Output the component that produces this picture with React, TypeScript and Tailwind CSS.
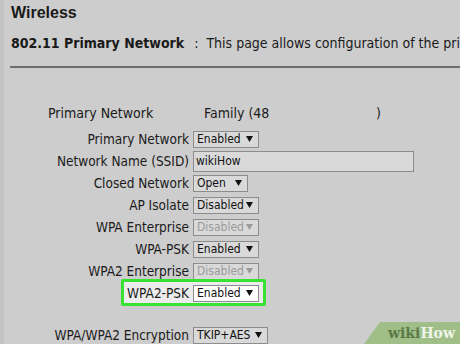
import React from 'react';

const ui = "font-['DejaVu_Sans_Condensed','DejaVu_Sans',sans-serif]";

type SelectProps = { value: string; w: string; disabled?: boolean; white?: boolean };

const Select = ({ value, w, disabled, white }: SelectProps) => (
  <div
    className={`flex h-[17px] items-center justify-between border border-[#8c8c8c] pl-[3px] pr-[5px] text-[12px] leading-none ${w} ${
      white ? 'bg-white' : 'bg-[#d9d9d9]'
    } ${disabled ? 'text-[#9a9a9a]' : 'text-[#111]'}`}
  >
    <span>{value}</span>
    <svg width="7" height="6" viewBox="0 0 7 6">
      <path d="M0 0h7L3.5 6z" fill={disabled ? '#9a9a9a' : '#111'} />
    </svg>
  </div>
);

const rows = [
  { label: 'Primary Network', ctrl: <Select value="Enabled" w="w-[66px]" /> },
  {
    label: 'Network Name (SSID)',
    ctrl: (
      <div className="flex h-[21px] w-[221px] items-center border border-[#8c8c8c] bg-[#d9d9d9] pl-[2px] text-[12px] text-[#111]">
        wikiHow
      </div>
    ),
  },
  { label: 'Closed Network', ctrl: <Select value="Open" w="w-[55px]" /> },
  { label: 'AP Isolate', ctrl: <Select value="Disabled" w="w-[66px]" /> },
  { label: 'WPA Enterprise', ctrl: <Select value="Disabled" w="w-[66px]" disabled /> },
  { label: 'WPA-PSK', ctrl: <Select value="Enabled" w="w-[66px]" /> },
  { label: 'WPA2 Enterprise', ctrl: <Select value="Disabled" w="w-[66px]" disabled /> },
];

export default function App() {
  return (
    <div className={`relative h-[344px] w-[460px] overflow-hidden bg-[#cdcdcd] text-[#1a1a1a] ${ui}`}>
      <div className="absolute left-0 top-0 h-full w-[4px] bg-[#c2c2c2]" />

      <h1 className="pl-[11px] pt-[3px] font-['Liberation_Sans',sans-serif] text-[16px] font-bold leading-[20px]">
        Wireless
      </h1>

      <div className="mt-[11px] overflow-hidden whitespace-nowrap pl-[11px] text-[14px] leading-[18px]">
        <span className="font-bold">802.11 Primary Network</span>
        <span className="pl-[10px] pr-[8px]">:</span>
        This page allows configuration of the primary network
      </div>

      <div className="ml-[10px] mt-[14px] border-t-2 border-[#6e6e6e]" />

      <div className="mt-[34px] flex h-[22px] items-center whitespace-nowrap text-[14px]">
        <span className="w-[204px] pl-[48px]">Primary Network</span>
        <span className="w-[172px]">Family (48</span>
        <span>)</span>
      </div>

      <div className="mt-[4px] grid grid-cols-[189px_auto] gap-x-[4px] text-[13.5px]">
        {rows.map((r) => (
          <React.Fragment key={r.label}>
            <div className="flex h-[22px] items-center justify-end whitespace-nowrap">{r.label}</div>
            <div className="flex h-[22px] items-center">{r.ctrl}</div>
          </React.Fragment>
        ))}

        <div className="relative flex h-[22px] items-center justify-end whitespace-nowrap">
          <div className="absolute left-[121px] top-[-3px] h-[27px] w-[145px] rounded-[2px] border-[3px] border-[#38e232] bg-[#ececec]" />
          <span className="relative">WPA2-PSK</span>
        </div>
        <div className="relative flex h-[22px] items-center">
          <Select value="Enabled" w="w-[66px]" white />
        </div>

        <div className="col-span-2 h-[20px]" />

        <div className="flex h-[22px] items-center justify-end whitespace-nowrap">WPA/WPA2 Encryption</div>
        <div className="flex h-[22px] items-center">
          <Select value="TKIP+AES" w="w-[75px]" />
        </div>
      </div>

      <div className="absolute bottom-0 right-0 flex h-[22px] w-[96px] items-center justify-end bg-[#a0bf88] pr-[5px] font-['DejaVu_Serif',serif] text-[14px] font-bold [clip-path:polygon(16px_0,100%_0,100%_100%,0_100%)]">
        <span className="text-[#5b7a47]">wiki</span>
        <span className="text-[#eef4e8]">How</span>
      </div>
    </div>
  );
}
